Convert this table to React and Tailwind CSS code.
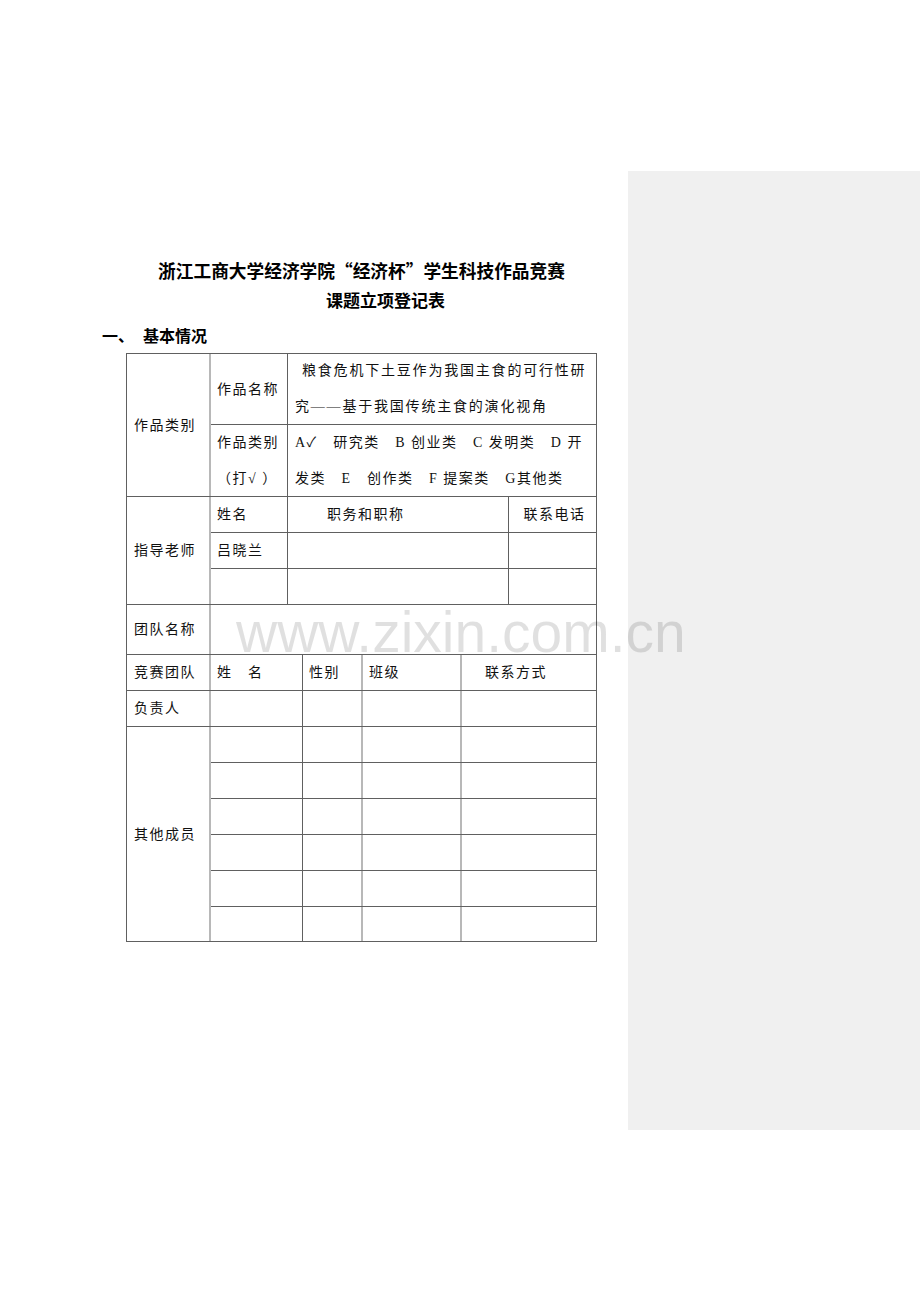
import React from 'react';

const dark = 'border-[#606060]';
const light = 'border-r-2 border-r-[#b8b8b8]';

const EmptyRow = ({ last }) => (
  <div className={`flex ${last ? 'h-[34px]' : `h-[36px] border-b ${dark}`}`}>
    <div className={`w-[92px] shrink-0 border-r ${dark}`} />
    <div className={`w-[60px] shrink-0 ${light}`} />
    <div className={`w-[99px] shrink-0 ${light}`} />
    <div className="flex-1" />
  </div>
);

export default function App() {
  return (
    <div className="relative flex min-h-[1302px] w-[920px] bg-white">
      <div className="w-[628px] shrink-0 pl-[102px] pt-[255px]">
        {/* Title */}
        <div className="ml-[24px] w-[471px] font-['Noto_Sans_CJK_SC',sans-serif] font-bold text-black">
          <div className="text-center text-[17.7px] leading-[30px]">
            浙江工商大学经济学院“经济杯”学生科技作品竞赛
          </div>
          <div className="pl-[48px] text-center text-[17px] leading-[30px]">课题立项登记表</div>
        </div>

        <div className="mt-[5px] flex font-['Noto_Sans_CJK_SC',sans-serif] text-[16px] font-bold leading-[30px] text-black">
          <span>一、</span>
          <span className="ml-[9px]">基本情况</span>
        </div>

        {/* Table */}
        <div
          className={`ml-[24px] mt-[3px] w-[471px] border ${dark} font-['Liberation_Serif','Noto_Sans_CJK_SC','DejaVu_Sans',serif] text-[14px] tracking-[1.5px] text-[#111]`}
        >
          {/* 作品类别 */}
          <div className={`flex h-[143px] border-b ${dark}`}>
            <div className={`flex w-[84px] shrink-0 items-center pl-[7px] ${light}`}>作品类别</div>
            <div className="flex flex-1 flex-col">
              <div className={`flex h-[71px] border-b ${dark}`}>
                <div className={`flex w-[77px] shrink-0 items-center border-r ${dark} pl-[6px]`}>
                  作品名称
                </div>
                <div className="flex flex-1 flex-col justify-center pl-[7px] leading-[36px] tracking-[1.8px]">
                  <div className="pl-[7px]">粮食危机下土豆作为我国主食的可行性研</div>
                  <div>究——基于我国传统主食的演化视角</div>
                </div>
              </div>
              <div className="flex flex-1">
                <div
                  className={`flex w-[77px] shrink-0 flex-col justify-center border-r ${dark} pl-[6px] leading-[36px]`}
                >
                  <div>作品类别</div>
                  <div>（打√ ）</div>
                </div>
                <div className="flex flex-1 flex-col justify-center whitespace-pre pl-[7px] leading-[36px]">
                  <div>A✓　研究类　B 创业类　C 发明类　D 开</div>
                  <div>发类　E　创作类　F 提案类　G其他类</div>
                </div>
              </div>
            </div>
          </div>

          {/* 指导老师 */}
          <div className={`flex h-[108px] border-b ${dark}`}>
            <div className={`flex w-[84px] shrink-0 items-center pl-[7px] ${light}`}>指导老师</div>
            <div className="flex flex-1 flex-col">
              <div className={`flex h-[36px] border-b ${dark}`}>
                <div className={`flex w-[77px] shrink-0 items-center border-r ${dark} pl-[6px]`}>姓名</div>
                <div className={`flex w-[221px] shrink-0 items-center border-r ${dark} pl-[39px]`}>
                  职务和职称
                </div>
                <div className="flex flex-1 items-center justify-center pl-[4px]">联系电话</div>
              </div>
              <div className={`flex h-[36px] border-b ${dark}`}>
                <div className={`flex w-[77px] shrink-0 items-center border-r ${dark} pl-[6px]`}>吕晓兰</div>
                <div className={`w-[221px] shrink-0 border-r ${dark}`} />
                <div className="flex-1" />
              </div>
              <div className="flex flex-1">
                <div className={`w-[77px] shrink-0 border-r ${dark}`} />
                <div className={`w-[221px] shrink-0 border-r ${dark}`} />
                <div className="flex-1" />
              </div>
            </div>
          </div>

          {/* 团队名称 */}
          <div className={`flex h-[50px] border-b ${dark}`}>
            <div className={`flex w-[84px] shrink-0 items-center pl-[7px] ${light}`}>团队名称</div>
            <div className="flex-1" />
          </div>

          {/* 竞赛团队 */}
          <div className={`flex h-[36px] border-b ${dark}`}>
            <div className={`flex w-[84px] shrink-0 items-center pl-[7px] ${light}`}>竞赛团队</div>
            <div className={`flex w-[92px] shrink-0 items-center border-r ${dark} pl-[6px]`}>姓　名</div>
            <div className={`flex w-[60px] shrink-0 items-center pl-[6px] ${light}`}>性别</div>
            <div className={`flex w-[99px] shrink-0 items-center pl-[6px] ${light}`}>班级</div>
            <div className="flex flex-1 items-center pl-[23px]">联系方式</div>
          </div>

          {/* 负责人 */}
          <div className={`flex h-[36px] border-b ${dark}`}>
            <div className={`flex w-[84px] shrink-0 items-center pl-[7px] ${light}`}>负责人</div>
            <div className={`w-[92px] shrink-0 border-r ${dark}`} />
            <div className={`w-[60px] shrink-0 ${light}`} />
            <div className={`w-[99px] shrink-0 ${light}`} />
            <div className="flex-1" />
          </div>

          {/* 其他成员 */}
          <div className="flex">
            <div className={`flex w-[84px] shrink-0 items-center pl-[7px] ${light}`}>其他成员</div>
            <div className="flex flex-1 flex-col">
              <EmptyRow />
              <EmptyRow />
              <EmptyRow />
              <EmptyRow />
              <EmptyRow />
              <EmptyRow last />
            </div>
          </div>
        </div>
      </div>

      {/* Side margin panel */}
      <div className="mt-[171px] h-[959px] w-[292px] bg-[#f0f0f0]" />

      {/* Watermark */}
      <div className="pointer-events-none absolute left-[236px] top-[604px] font-['Liberation_Sans',sans-serif] text-[57px] leading-[57px] text-black/[0.12]">
        www.zixin.com.cn
      </div>
    </div>
  );
}
